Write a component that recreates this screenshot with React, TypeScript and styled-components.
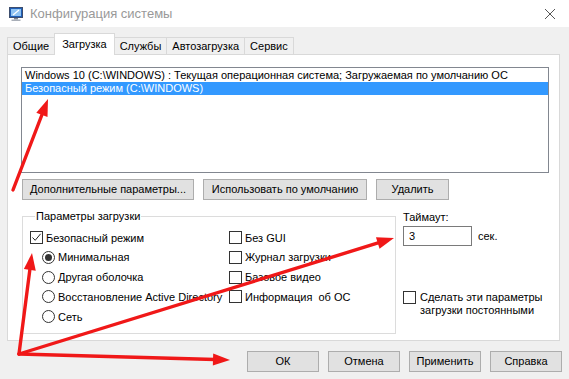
import React from "react";
import styled, { createGlobalStyle } from "styled-components";

const GlobalStyle = createGlobalStyle`
  html, body {
    margin: 0;
    padding: 0;
    background: #f0f0f0;
  }
  body {
    font-family: "Liberation Sans", Arial, sans-serif;
    font-size: 11px;
    color: #000;
  }
`;

const Window = styled.div`
  position: relative;
  width: 569px;
  height: 379px;
  background: #f0f0f0;
  display: flex;
  flex-direction: column;
  overflow: hidden;
`;

const TitleBar = styled.div`
  height: 27px;
  background: #fff;
  display: flex;
  align-items: center;
  padding-left: 8px;
  padding-right: 8px;
  flex-shrink: 0;
`;

const Title = styled.div`
  margin-left: 6px;
  font-size: 13px;
  color: #999;
  flex-grow: 1;
  line-height: 20px;
`;

const CloseButton = styled.div`
  width: 16px;
  height: 16px;
  display: flex;
  align-items: center;
  justify-content: center;
  margin-right: 3px;
`;

const TabStrip = styled.div`
  display: flex;
  align-items: flex-end;
  height: 20px;
  margin-top: 7px;
  padding-left: 7px;
  position: relative;
  z-index: 1;
`;

const Tab = styled.div<{ $active?: boolean }>`
  box-sizing: border-box;
  border: 1px solid #d9d9d9;
  border-bottom: none;
  margin-right: -1px;
  padding: 1px 5px 0 5px;
  line-height: 15px;
  white-space: nowrap;
  ${(p) =>
    p.$active
      ? `
  height: 22px;
  margin-bottom: -1px;
  background: #fff;
  padding-top: 3px;
  padding-left: 7px;
  padding-right: 7px;
  `
      : `
  height: 17px;
  background: #f0f0f0;
  `}
`;

const Panel = styled.div`
  box-sizing: border-box;
  margin-left: 7px;
  width: 553px;
  height: 287px;
  background: #fff;
  border: 1px solid #d9d9d9;
  padding: 12px 0 0 13px;
  display: flex;
  flex-direction: column;
`;

const ListBox = styled.div`
  box-sizing: border-box;
  width: 528px;
  height: 106px;
  border: 1px solid #828790;
  background: #fff;
  padding-top: 1px;
`;

const ListItem = styled.div<{ $selected?: boolean }>`
  height: 13px;
  line-height: 13px;
  padding-left: 3px;
  white-space: nowrap;
  background: ${(p) => (p.$selected ? "#3399ff" : "transparent")};
  color: ${(p) => (p.$selected ? "#fff" : "#000")};
`;

const ButtonRow = styled.div`
  display: flex;
  gap: 9px;
  margin-top: 6px;
  margin-left: 1px;
`;

const Button = styled.button<{ $width: number }>`
  box-sizing: border-box;
  width: ${(p) => p.$width}px;
  height: 21px;
  background: #e1e1e1;
  border: 1px solid #adadad;
  font-family: inherit;
  font-size: 11px;
  color: #000;
  padding: 0;
  line-height: 17px;
  white-space: nowrap;
`;

const Lower = styled.div`
  display: flex;
  margin-top: 9px;
  margin-left: 1px;
`;

const GroupBox = styled.fieldset`
  box-sizing: border-box;
  width: 374px;
  height: 125px;
  margin: 0;
  border: 1px solid #dcdcdc;
  padding: 8px 0 0 7px;
  display: flex;
`;

const Legend = styled.legend`
  padding: 0 1px;
  margin-left: 5px;
  line-height: 14px;
`;

const Column = styled.div<{ $width?: number }>`
  display: flex;
  flex-direction: column;
  gap: 6.8px;
  width: ${(p) => (p.$width ? `${p.$width}px` : "auto")};
`;

const OptionRow = styled.label<{ $indent?: boolean }>`
  display: flex;
  align-items: center;
  height: 13px;
  white-space: nowrap;
  margin-left: ${(p) => (p.$indent ? "12px" : "0")};
`;

const Box = styled.span`
  box-sizing: border-box;
  width: 13px;
  height: 13px;
  border: 1px solid #333;
  background: #fff;
  flex-shrink: 0;
  margin-right: 3px;
  display: flex;
  align-items: center;
  justify-content: center;
`;

const Radio = styled.span<{ $on?: boolean }>`
  box-sizing: border-box;
  width: 13px;
  height: 13px;
  border: 1px solid #333;
  border-radius: 50%;
  background: #fff;
  flex-shrink: 0;
  margin-right: 3px;
  display: flex;
  align-items: center;
  justify-content: center;
  &::after {
    content: "";
    width: 7px;
    height: 7px;
    border-radius: 50%;
    background: ${(p) => (p.$on ? "#333" : "transparent")};
  }
`;

const Side = styled.div`
  margin-left: 7px;
  display: flex;
  flex-direction: column;
`;

const SideLabel = styled.div`
  line-height: 14px;
  margin-top: 1px;
`;

const TimeoutRow = styled.div`
  display: flex;
  align-items: center;
  margin-top: 2px;
  gap: 6px;
`;

const TextInput = styled.div`
  box-sizing: border-box;
  width: 69px;
  height: 20px;
  border: 1px solid #7a7a7a;
  background: #fff;
  padding-left: 5px;
  line-height: 18px;
`;

const PersistRow = styled.label`
  display: flex;
  align-items: flex-start;
  margin-top: 45px;
  line-height: 13px;
  & > span:first-child {
    margin-top: 0px;
    margin-right: 4px;
  }
`;

const Footer = styled.div`
  display: flex;
  justify-content: flex-end;
  gap: 9px;
  margin-top: 10px;
  padding-right: 7px;
`;

const Overlay = styled.svg`
  position: absolute;
  left: 0;
  top: 0;
  width: 569px;
  height: 379px;
  pointer-events: none;
`;

const Check = () => (
  <svg width="11" height="11" viewBox="0 0 11 11">
    <path d="M1.5 5.5 L4.2 8.3 L9.6 1.8" fill="none" stroke="#222" strokeWidth="1" />
  </svg>
);

const CheckBox: React.FC<{ checked?: boolean; children: React.ReactNode }> = ({
  checked,
  children,
}) => (
  <OptionRow>
    <Box>{checked && <Check />}</Box>
    {children}
  </OptionRow>
);

const RadioOption: React.FC<{ on?: boolean; children: React.ReactNode }> = ({
  on,
  children,
}) => (
  <OptionRow $indent>
    <Radio $on={on} />
    {children}
  </OptionRow>
);

const AppIcon = () => (
  <svg width="16" height="16" viewBox="0 0 16 16">
    <rect x="1.5" y="1.5" width="13" height="10" fill="#1f5fb8" stroke="#3d4e6e" />
    <rect x="3" y="3" width="10" height="7" fill="#8fc3f2" />
    <path d="M5 9 L11 4" stroke="#fff" strokeWidth="1.2" />
    <rect x="6" y="12" width="4" height="1.5" fill="#7a8290" />
    <rect x="3.5" y="13.5" width="9" height="1.5" fill="#a9afb8" />
  </svg>
);

const CloseIcon = () => (
  <svg width="12" height="12" viewBox="0 0 12 12">
    <path d="M1 1 L11 11 M11 1 L1 11" stroke="#555" strokeWidth="1" />
  </svg>
);

type Arrow = { x1: number; y1: number; x2: number; y2: number };

const arrows: Arrow[] = [
  { x1: 13, y1: 190, x2: 48, y2: 99 },
  { x1: 19, y1: 354, x2: 32, y2: 253 },
  { x1: 19, y1: 354, x2: 394, y2: 238 },
  { x1: 19, y1: 354, x2: 230, y2: 360 },
];

const ArrowShape: React.FC<Arrow> = ({ x1, y1, x2, y2 }) => {
  const dx = x2 - x1;
  const dy = y2 - y1;
  const len = Math.hypot(dx, dy);
  const ux = dx / len;
  const uy = dy / len;
  const head = 17;
  const half = 6;
  const bx = x2 - ux * head;
  const by = y2 - uy * head;
  const pts = [
    `${x2},${y2}`,
    `${bx - uy * half},${by + ux * half}`,
    `${bx + uy * half},${by - ux * half}`,
  ].join(" ");
  return (
    <g>
      <line x1={x1} y1={y1} x2={bx + ux * 2} y2={by + uy * 2} stroke="#f01818" strokeWidth="3.4" strokeLinecap="round" />
      <polygon points={pts} fill="#f01818" />
    </g>
  );
};

export default function App() {
  return (
    <>
      <GlobalStyle />
      <Window>
        <TitleBar>
          <AppIcon />
          <Title>Конфигурация системы</Title>
          <CloseButton>
            <CloseIcon />
          </CloseButton>
        </TitleBar>
        <TabStrip>
          <Tab>Общие</Tab>
          <Tab $active>Загрузка</Tab>
          <Tab>Службы</Tab>
          <Tab>Автозагрузка</Tab>
          <Tab>Сервис</Tab>
        </TabStrip>
        <Panel>
          <ListBox>
            <ListItem>
              Windows 10 (C:\WINDOWS) : Текущая операционная система; Загружаемая по умолчанию ОС
            </ListItem>
            <ListItem $selected>Безопасный режим (C:\WINDOWS)</ListItem>
          </ListBox>
          <ButtonRow>
            <Button $width={172}>Дополнительные параметры...</Button>
            <Button $width={164}>Использовать по умолчанию</Button>
            <Button $width={73}>Удалить</Button>
          </ButtonRow>
          <Lower>
            <GroupBox>
              <Legend>Параметры загрузки</Legend>
              <Column $width={199}>
                <CheckBox checked>Безопасный режим</CheckBox>
                <RadioOption on>Минимальная</RadioOption>
                <RadioOption>Другая оболочка</RadioOption>
                <RadioOption>Восстановление Active Directory</RadioOption>
                <RadioOption>Сеть</RadioOption>
              </Column>
              <Column>
                <CheckBox>Без GUI</CheckBox>
                <CheckBox>Журнал загрузки</CheckBox>
                <CheckBox>Базовое видео</CheckBox>
                <CheckBox>Информация&nbsp; об ОС</CheckBox>
              </Column>
            </GroupBox>
            <Side>
              <SideLabel>Таймаут:</SideLabel>
              <TimeoutRow>
                <TextInput>3</TextInput>
                <span>сек.</span>
              </TimeoutRow>
              <PersistRow>
                <Box />
                <span>
                  Сделать эти параметры
                  <br />
                  загрузки постоянными
                </span>
              </PersistRow>
            </Side>
          </Lower>
        </Panel>
        <Footer>
          <Button $width={72}>ОК</Button>
          <Button $width={72}>Отмена</Button>
          <Button $width={72}>Применить</Button>
          <Button $width={72}>Справка</Button>
        </Footer>
        <Overlay viewBox="0 0 569 379">
          {arrows.map((a, i) => (
            <ArrowShape key={i} {...a} />
          ))}
        </Overlay>
      </Window>
    </>
  );
}
